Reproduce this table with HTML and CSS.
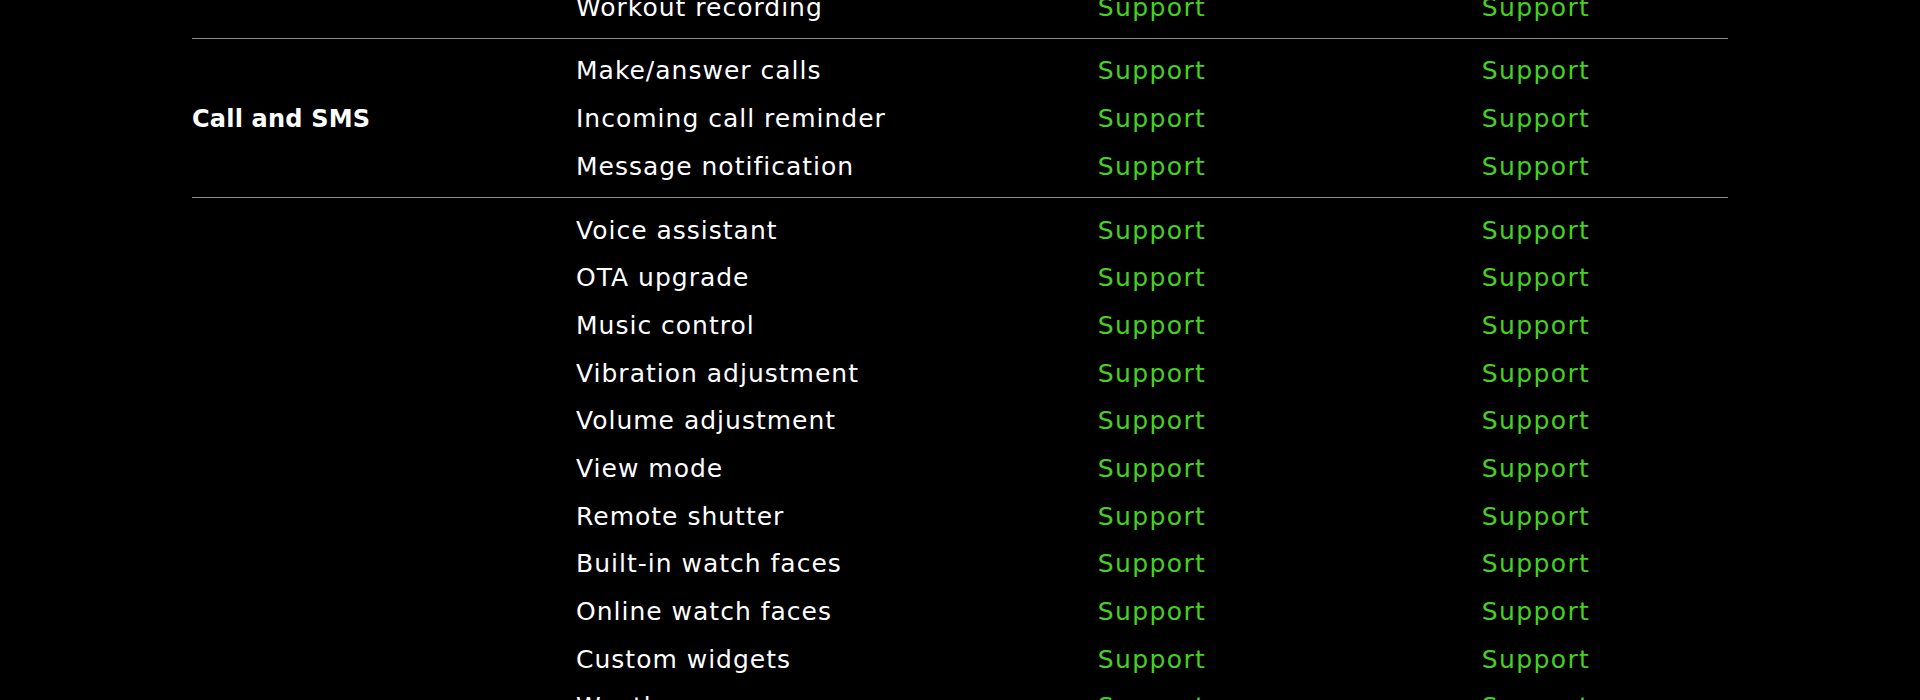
FILE: index.html
```html
<!DOCTYPE html>
<html lang="en">
<head>
<meta charset="utf-8">
<title>Specifications</title>
<link rel="stylesheet" href="styles.css">
</head>
<body>
<main class="spec">
  <section class="group">
    <div class="group-label">Health and sports</div>
    <div class="rows">
      <div class="row"><span class="feature">Heart rate monitoring</span><span class="value">Support</span><span class="value">Support</span></div>
      <div class="row"><span class="feature">Blood oxygen monitoring</span><span class="value">Support</span><span class="value">Support</span></div>
      <div class="row"><span class="feature">Sleep monitoring</span><span class="value">Support</span><span class="value">Support</span></div>
      <div class="row"><span class="feature">Stress monitoring</span><span class="value">Support</span><span class="value">Support</span></div>
      <div class="row"><span class="feature">Sports modes</span><span class="value">Support</span><span class="value">Support</span></div>
      <div class="row"><span class="feature">Workout recording</span><span class="value">Support</span><span class="value">Support</span></div>
    </div>
  </section>
  <section class="group">
    <div class="group-label">Call and SMS</div>
    <div class="rows">
      <div class="row"><span class="feature">Make/answer calls</span><span class="value">Support</span><span class="value">Support</span></div>
      <div class="row"><span class="feature">Incoming call reminder</span><span class="value">Support</span><span class="value">Support</span></div>
      <div class="row"><span class="feature">Message notification</span><span class="value">Support</span><span class="value">Support</span></div>
    </div>
  </section>
  <section class="group">
    <div class="group-label">Other functions</div>
    <div class="rows">
      <div class="row"><span class="feature">Voice assistant</span><span class="value">Support</span><span class="value">Support</span></div>
      <div class="row"><span class="feature">OTA upgrade</span><span class="value">Support</span><span class="value">Support</span></div>
      <div class="row"><span class="feature">Music control</span><span class="value">Support</span><span class="value">Support</span></div>
      <div class="row"><span class="feature">Vibration adjustment</span><span class="value">Support</span><span class="value">Support</span></div>
      <div class="row"><span class="feature">Volume adjustment</span><span class="value">Support</span><span class="value">Support</span></div>
      <div class="row"><span class="feature">View mode</span><span class="value">Support</span><span class="value">Support</span></div>
      <div class="row"><span class="feature">Remote shutter</span><span class="value">Support</span><span class="value">Support</span></div>
      <div class="row"><span class="feature">Built-in watch faces</span><span class="value">Support</span><span class="value">Support</span></div>
      <div class="row"><span class="feature">Online watch faces</span><span class="value">Support</span><span class="value">Support</span></div>
      <div class="row"><span class="feature">Custom widgets</span><span class="value">Support</span><span class="value">Support</span></div>
      <div class="row"><span class="feature">Weather</span><span class="value">Support</span><span class="value">Support</span></div>
      <div class="row"><span class="feature">Alarm clock</span><span class="value">Support</span><span class="value">Support</span></div>
      <div class="row"><span class="feature">Stopwatch</span><span class="value">Support</span><span class="value">Support</span></div>
      <div class="row"><span class="feature">Timer</span><span class="value">Support</span><span class="value">Support</span></div>
      <div class="row"><span class="feature">Find my phone</span><span class="value">Support</span><span class="value">Support</span></div>
      <div class="row"><span class="feature">Flashlight</span><span class="value">Support</span><span class="value">Support</span></div>
      <div class="row"><span class="feature">Calendar</span><span class="value">Support</span><span class="value">Support</span></div>
      <div class="row"><span class="feature">Calculator</span><span class="value">Support</span><span class="value">Support</span></div>
      <div class="row"><span class="feature">Do not disturb</span><span class="value">Support</span><span class="value">Support</span></div>
      <div class="row"><span class="feature">Raise to wake</span><span class="value">Support</span><span class="value">Support</span></div>
      <div class="row"><span class="feature">Sedentary reminder</span><span class="value">Support</span><span class="value">Support</span></div>
      <div class="row"><span class="feature">Drinking reminder</span><span class="value">Support</span><span class="value">Support</span></div>
      <div class="row"><span class="feature">Breathing training</span><span class="value">Support</span><span class="value">Support</span></div>
    </div>
  </section>
</main>
</body>
</html>
```
FILE: styles.css
```css
html, body {
  margin: 0;
  padding: 0;
  background: #000;
}

body {
  font-family: "DejaVu Sans", "Liberation Sans", sans-serif;
  color: #fff;
  overflow: hidden;
}

.spec {
  width: 1536px;
  margin: -263.2px auto 0;
}

.group {
  display: grid;
  grid-template-columns: 1fr 3fr;
  padding: 8.5px 0 6.5px;
  border-bottom: 1px solid #8a8a8a;
}

.group-label {
  align-self: center;
  font-size: 24px;
  font-weight: 700;
  letter-spacing: 0.2px;
  color: #fff;
}

.rows {
  display: flex;
  flex-direction: column;
}

.row {
  display: grid;
  grid-template-columns: repeat(3, 1fr);
  height: 47.7px;
  line-height: 47.7px;
  font-size: 25px;
  letter-spacing: 1px;
}

.feature {
  color: #fff;
  white-space: nowrap;
}

.value {
  color: #45d11f;
  text-align: center;
  letter-spacing: 1.4px;
}
```
